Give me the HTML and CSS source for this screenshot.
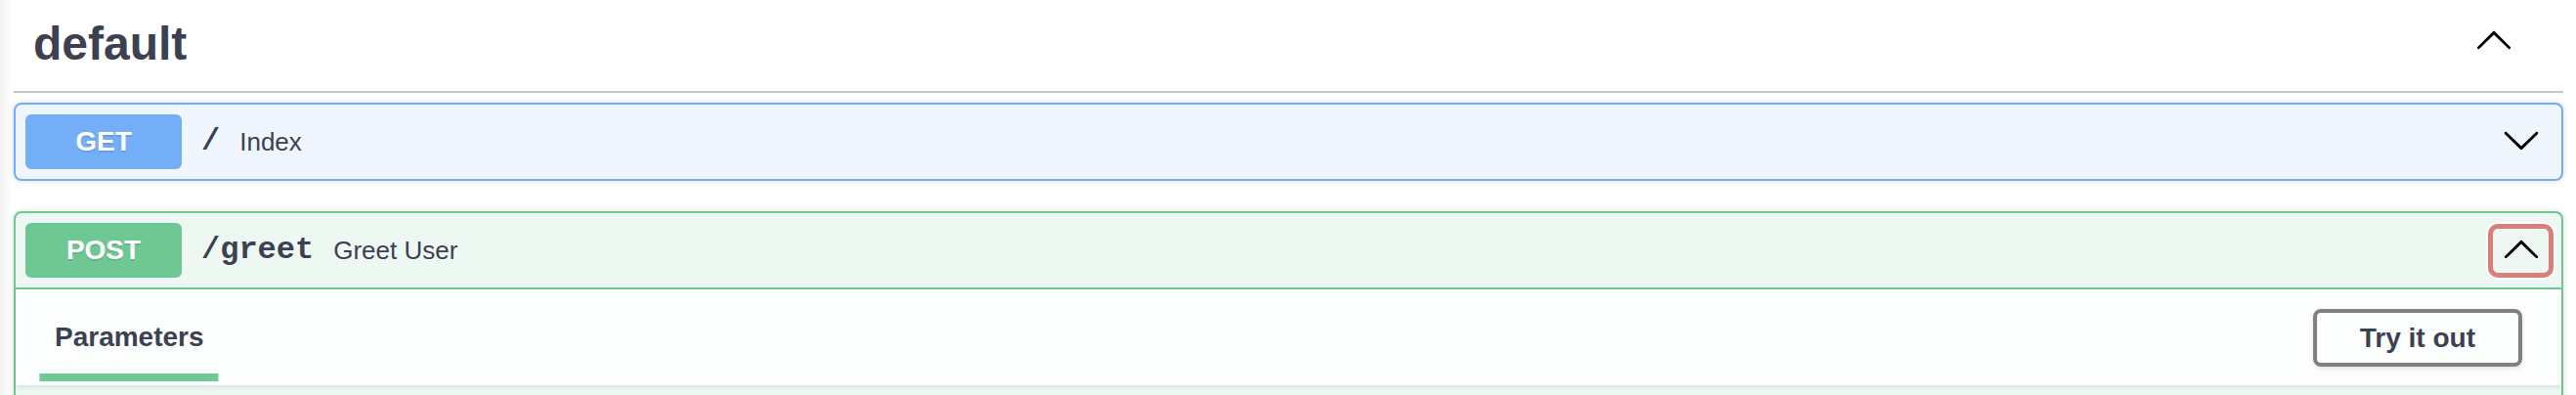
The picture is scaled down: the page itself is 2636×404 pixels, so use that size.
FILE: index.html
```html
<!DOCTYPE html>
<html lang="en">
<head>
<meta charset="utf-8">
<title>default</title>
<link rel="stylesheet" href="styles.css">
</head>
<body>
<div class="page">
  <section class="tag-section">
    <h3 class="opblock-tag">
      <span class="tag-name">default</span>
      <button class="expand-operation" type="button" aria-label="Collapse operation">
        <svg class="chev" viewBox="0 0 20 20" width="40" height="40"><path d="M17.418 14.908c.272.268.709.268.979 0s.271-.701 0-.969l-7.908-7.83c-.27-.268-.707-.268-.979 0l-7.908 7.83c-.27.268-.27.701 0 .969.271.268.709.268.979 0L10 7.767l7.418 7.141z"/></svg>
      </button>
    </h3>
    <div class="operations">
      <div class="opblock opblock-get">
        <div class="opblock-summary">
          <span class="method method-get">GET</span>
          <span class="path">/</span>
          <span class="desc">Index</span>
          <button class="arrow" type="button" aria-label="Expand">
            <svg class="chev" viewBox="0 0 20 20" width="40" height="40"><path d="M17.418 6.109c.272-.268.709-.268.979 0s.271.701 0 .969l-7.908 7.83c-.27.268-.707.268-.979 0l-7.908-7.83c-.27-.268-.27-.701 0-.969.271-.268.709-.268.979 0L10 13.25l7.418-7.141z"/></svg>
          </button>
        </div>
      </div>
      <div class="opblock opblock-post is-open">
        <div class="opblock-summary">
          <span class="method method-post">POST</span>
          <span class="path">/greet</span>
          <span class="desc">Greet User</span>
          <button class="arrow focused" type="button" aria-label="Collapse">
            <svg class="chev" viewBox="0 0 20 20" width="40" height="40"><path d="M17.418 14.908c.272.268.709.268.979 0s.271-.701 0-.969l-7.908-7.83c-.27-.268-.707-.268-.979 0l-7.908 7.83c-.27.268-.27.701 0 .969.271.268.709.268.979 0L10 7.767l7.418 7.141z"/></svg>
          </button>
        </div>
        <div class="opblock-body">
          <div class="section-header">
            <div class="tab-header">
              <h4 class="tab-item"><span class="tab-label">Parameters</span></h4>
            </div>
            <button class="try-out" type="button">Try it out</button>
          </div>
          <div class="params-body"></div>
        </div>
      </div>
    </div>
  </section>
</div>
</body>
</html>
```

FILE: styles.css
```css
html, body {
  margin: 0;
  height: 404px;
  overflow: hidden;
}

body {
  background: linear-gradient(to right, #f1f1f1 0, #ffffff 12px);
  font-family: "Liberation Sans", Arial, sans-serif;
  color: #3b4151;
}

.page {
  padding: 0 13px 0 14px;
}

.opblock-tag {
  display: flex;
  align-items: center;
  margin: 0 0 10px;
  padding: 18px 51px 22px 20px;
  border-bottom: 2px solid #c4c6cb;
  font-size: 48px;
  line-height: 53px;
  font-weight: 700;
  color: #3b4151;
}

.tag-name {
  flex: 1;
}

.expand-operation {
  display: flex;
  border: 0;
  background: none;
  margin: 0;
  padding: 0 0 9px;
}

.chev {
  display: block;
  fill: #000;
}

.opblock {
  border: 2px solid;
  border-radius: 8px;
  margin-bottom: 31px;
  box-shadow: 0 0 6px rgba(0, 0, 0, 0.13);
}

.opblock-get {
  border-color: #72adf7;
  background: #eff6fe;
}

.opblock-post {
  border-color: #6fc794;
  background: #eef8f2;
}

.opblock-summary {
  display: flex;
  align-items: center;
  padding: 10px 8px 10px 10px;
}

.is-open .opblock-summary {
  border-bottom: 2px solid #6fc794;
}

.method {
  min-width: 160px;
  padding: 12px 0;
  border-radius: 6px;
  font-size: 28px;
  line-height: 32px;
  font-weight: 700;
  text-align: center;
  color: #fff;
  text-shadow: 0 2px 0 rgba(0, 0, 0, 0.1);
}

.method-get {
  background: #74aef7;
}

.method-post {
  background: #6fc894;
}

.path {
  padding: 0 20px;
  font-family: "Liberation Mono", "Courier New", monospace;
  font-size: 32px;
  line-height: 36px;
  font-weight: 700;
  color: #3b4151;
}

.desc {
  flex: 1;
  font-size: 26px;
  line-height: 30px;
  color: #3b4151;
}

.arrow {
  display: flex;
  justify-content: center;
  align-items: flex-start;
  width: 67px;
  height: 55px;
  box-sizing: border-box;
  margin: 0;
  padding: 0;
  border: 5px solid transparent;
  border-radius: 10px;
  background: none;
}

.arrow.focused {
  border-color: #d97e7a;
  box-shadow: 0 0 0 2px #fff;
}

.section-header {
  display: flex;
  align-items: center;
  min-height: 98px;
  box-sizing: border-box;
  padding: 0 40px;
  background: rgba(255, 255, 255, 0.8);
  box-shadow: 0 2px 4px rgba(0, 0, 0, 0.1);
}

.tab-header {
  flex: 1;
}

.tab-item {
  margin: 0;
  font-size: 28px;
  line-height: 32px;
  font-weight: 700;
  color: #3b4151;
}

.tab-label {
  position: relative;
}

.tab-label::after {
  content: "";
  position: absolute;
  left: 50%;
  bottom: -30px;
  width: 120%;
  height: 8px;
  transform: translateX(-50%);
  background: #6fc894;
}

.try-out {
  margin: 0;
  padding: 10px 44px;
  border: 4px solid #808080;
  border-radius: 8px;
  background: transparent;
  font-family: "Liberation Sans", Arial, sans-serif;
  font-size: 28px;
  line-height: 31px;
  font-weight: 700;
  color: #3b4151;
  box-shadow: 0 2px 4px rgba(0, 0, 0, 0.1);
}

.params-body {
  height: 120px;
}
```
